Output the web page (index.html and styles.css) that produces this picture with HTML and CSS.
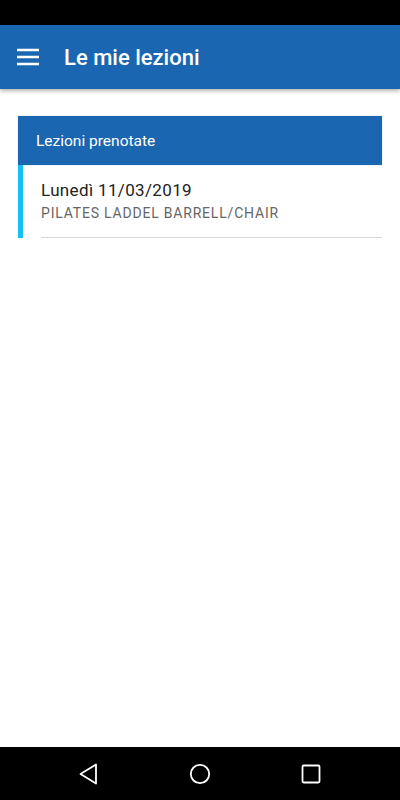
FILE: index.html
```html
<!DOCTYPE html>
<html lang="it">
<head>
    <meta charset="UTF-8">
    <meta name="viewport" content="width=device-width, initial-scale=1.0">
    <title>Le mie lezioni</title>
    <link rel="stylesheet" href="styles.css">
</head>
<body>
    <div class="status-bar"></div>

    <header class="app-bar">
        <svg class="menu-icon" width="24" height="24" viewBox="0 0 24 24">
            <path d="M1 5h22M1 12h22M1 19h22" stroke="#fff" stroke-width="2.6" fill="none"/>
        </svg>
        <h1>Le mie lezioni</h1>
    </header>

    <main class="content">
        <section class="card">
            <div class="card-header">Lezioni prenotate</div>
            <div class="lesson">
                <div class="lesson-body">
                    <p class="lesson-date">Lunedì 11/03/2019</p>
                    <p class="lesson-name">PILATES LADDEL BARRELL/CHAIR</p>
                </div>
            </div>
        </section>
    </main>

    <nav class="nav-bar">
        <!-- back, home, recents -->
        <svg width="24" height="24" viewBox="0 0 24 24">
            <path d="M19 2.5v19L3.5 12z" stroke="#fff" stroke-width="1.8" stroke-linejoin="round" fill="none"/>
        </svg>
        <svg width="24" height="24" viewBox="0 0 24 24">
            <circle cx="12" cy="12" r="9.2" stroke="#fff" stroke-width="1.8" fill="none"/>
        </svg>
        <svg width="24" height="24" viewBox="0 0 24 24">
            <rect x="3.5" y="3.5" width="17" height="17" rx="1.2" stroke="#fff" stroke-width="1.8" fill="none"/>
        </svg>
    </nav>
</body>
</html>
```

FILE: styles.css
```css
body {
    margin: 0;
    width: 400px;
    height: 800px;
    display: flex;
    flex-direction: column;
    font-family: Roboto, "Noto Sans", sans-serif;
    background-color: #fff;
    overflow: hidden;
}
.status-bar {
    height: 25px;
    background-color: #000;
}
.app-bar {
    height: 64px;
    display: flex;
    align-items: center;
    gap: 24px;
    padding-left: 16px;
    background-color: #1b66b0;
    box-shadow: 0 2px 4px rgba(0, 0, 0, 0.3);
    position: relative;
}
.app-bar h1 {
    margin: 0;
    color: #fff;
    font-size: 22px;
    font-weight: 500;
}
.content {
    flex: 1;
    padding: 27px 18px 0;
}
.card-header {
    height: 49px;
    display: flex;
    align-items: center;
    padding-left: 18px;
    background-color: #1b66b0;
    box-shadow: 0 0 1px rgba(27, 102, 176, 0.4);
    color: #fff;
    font-size: 15.5px;
}
.lesson {
    border-left: 5px solid #16bff3;
    padding-left: 18px;
}
.lesson-body {
    padding: 15px 0 16px;
    border-bottom: 1px solid #d6d6d6;
}
.lesson-date {
    margin: 0;
    font-size: 17px;
    letter-spacing: 0.35px;
    color: #222;
}
.lesson-name {
    margin: 5px 0 0;
    font-size: 14px;
    letter-spacing: 0.8px;
    color: #666;
}
.nav-bar {
    height: 53px;
    display: flex;
    justify-content: center;
    align-items: center;
    gap: 87px;
    background-color: #000;
}
```
